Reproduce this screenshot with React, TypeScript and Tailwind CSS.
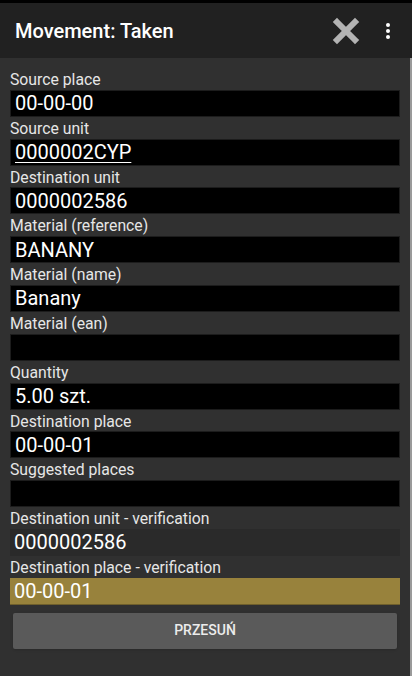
import React from 'react';

// ===========================================
// FIELD
// ===========================================

interface FieldProps {
  label: string;
  value?: string;
  underline?: boolean;
  variant?: 'default' | 'muted' | 'active';
}

const BOX_CLASSES: Record<NonNullable<FieldProps['variant']>, string> = {
  default: 'bg-black border border-[#1c1c1c]',
  muted: 'bg-[#2a2a2a]',
  active: 'bg-[#98823c] border-b border-[#6f5f2c]',
};

/** Label + read-only value box */
function Field({ label, value = '', underline, variant = 'default' }: FieldProps) {
  return (
    <div>
      <div className="h-[21.8px] pt-[2px] text-[15.75px] leading-[19px] text-[#e6e6e6]">{label}</div>
      <div className={`h-[27px] w-[390px] pl-[4px] flex items-center text-[20px] leading-none text-white ${BOX_CLASSES[variant]}`}>
        <span className={underline ? 'underline underline-offset-[3px] decoration-1' : ''}>{value}</span>
      </div>
    </div>
  );
}

const FIELDS: FieldProps[] = [
  { label: 'Source place', value: '00-00-00' },
  { label: 'Source unit', value: '0000002CYP', underline: true },
  { label: 'Destination unit', value: '0000002586' },
  { label: 'Material (reference)', value: 'BANANY' },
  { label: 'Material (name)', value: 'Banany' },
  { label: 'Material (ean)' },
  { label: 'Quantity', value: '5.00 szt.' },
  { label: 'Destination place', value: '00-00-01' },
  { label: 'Suggested places' },
  { label: 'Destination unit - verification', value: '0000002586', variant: 'muted' },
  { label: 'Destination place - verification', value: '00-00-01', variant: 'active' },
];

// ===========================================
// APP
// ===========================================

export default function App() {
  return (
    <div
      className="w-[412px] h-[676px] flex flex-col bg-black overflow-hidden"
      style={{ fontFamily: 'Roboto, "Noto Sans", sans-serif' }}
    >
      <div className="h-[3px] bg-black" />
      <header className="h-[55px] bg-[#212121] flex items-center pl-[15px] pr-[22px]">
        <h1 className="flex-1 text-[20px] font-medium text-white">Movement: Taken</h1>
        <svg width="28" height="28" viewBox="0 0 28 28" className="mr-[26px]">
          <path d="M5 5 L23 23 M23 5 L5 23" stroke="#b3b3b3" strokeWidth="6" strokeLinecap="square" />
        </svg>
        <div className="flex flex-col gap-[2px] items-center">
          <span className="w-[4px] h-[4px] rounded-full bg-white" />
          <span className="w-[4px] h-[4px] rounded-full bg-white" />
          <span className="w-[4px] h-[4px] rounded-full bg-white" />
        </div>
      </header>
      <div className="flex-1 flex">
        <main className="w-[410px] bg-[#303030] pt-[10px] pl-[10px]">
          <div className="flex flex-col">
            {FIELDS.map((f) => (
              <Field key={f.label} {...f} />
            ))}
          </div>
          <button className="mt-[8px] ml-[3px] w-[384px] h-[36px] bg-[#5a5a5a] rounded-[2px] text-[14px] font-medium text-[#ececec] shadow-sm">
            PRZESUŃ
          </button>
        </main>
        <div className="w-[2px] bg-[#9a9a9a]" />
      </div>
    </div>
  );
}
